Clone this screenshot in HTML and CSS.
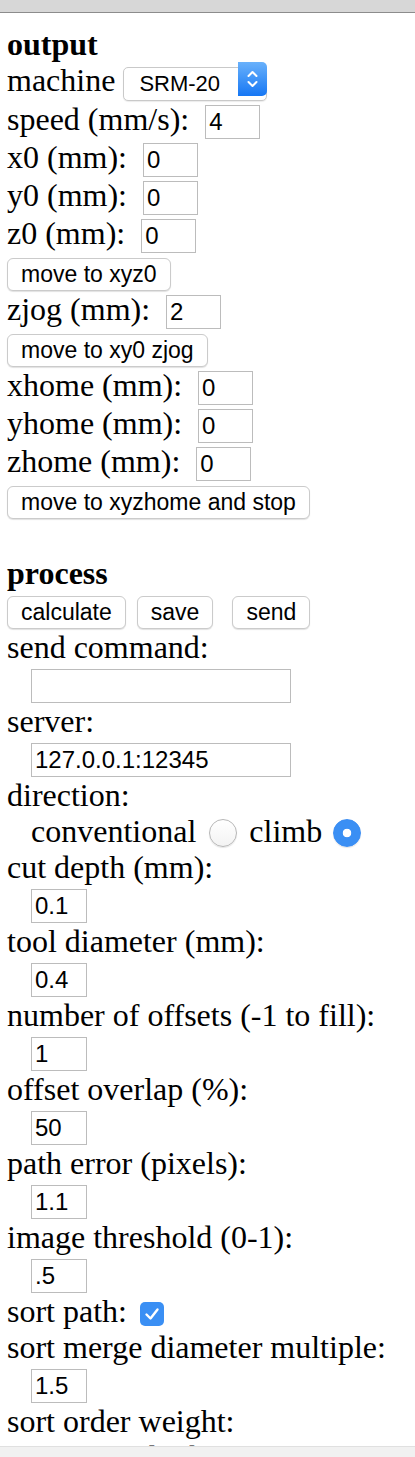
FILE: index.html
```html
<!DOCTYPE html>
<html lang="en">
<head>
    <meta charset="UTF-8">
    <meta name="viewport" content="width=device-width, initial-scale=1.0">
    <title>path output</title>
    <link rel="stylesheet" href="styles.css">
</head>
<body>
    <div class="topbar"></div>
    <div class="panel">
        <div class="heading">output</div>
        <div class="line">machine<span class="select-wrap"><select class="machine"><option>SRM-20</option><option>MDX-20</option></select><svg class="select-arrow" width="29" height="34" viewBox="0 0 29 34">
            <defs>
                <linearGradient id="blue" x1="0" y1="0" x2="0" y2="1">
                    <stop offset="0" stop-color="#69b1fb"/>
                    <stop offset="1" stop-color="#1677f4"/>
                </linearGradient>
            </defs>
            <path d="M0 0 H24 A5 5 0 0 1 29 5 V29 A5 5 0 0 1 24 34 H0 Z" fill="url(#blue)"/>
            <path d="M10.5 14 L14.5 10 L18.5 14 M10.5 20 L14.5 24 L18.5 20" fill="none" stroke="#fff" stroke-width="2" stroke-linecap="round" stroke-linejoin="round"/>
        </svg></span></div>
        <div class="line">speed (mm/s):<input class="num" type="text" value="4"></div>
        <div class="line">x0 (mm):<input class="num" type="text" value="0"></div>
        <div class="line">y0 (mm):<input class="num" type="text" value="0"></div>
        <div class="line">z0 (mm):<input class="num" type="text" value="0"></div>
        <div class="line"><button class="btn">move to xyz0</button></div>
        <div class="line">zjog (mm):<input class="num" type="text" value="2"></div>
        <div class="line"><button class="btn">move to xy0 zjog</button></div>
        <div class="line">xhome (mm):<input class="num" type="text" value="0"></div>
        <div class="line">yhome (mm):<input class="num" type="text" value="0"></div>
        <div class="line">zhome (mm):<input class="num" type="text" value="0"></div>
        <div class="line"><button class="btn">move to xyzhome and stop</button></div>
        <div class="line">&nbsp;</div>

        <div class="heading">process</div>
        <div class="line"><button class="btn calc">calculate</button><button class="btn save">save</button><button class="btn">send</button></div>
        <div class="line">send command:</div>
        <div class="line indent"><input class="wide" type="text" value=""></div>
        <div class="line">server:</div>
        <div class="line indent"><input class="wide" type="text" value="127.0.0.1:12345"></div>
        <div class="line">direction:</div>
        <div class="line indent">conventional<input class="radio" type="radio" name="direction">climb<input class="radio climb" type="radio" name="direction" checked></div>
        <div class="line">cut depth (mm):</div>
        <div class="line indent"><input class="num" type="text" value="0.1"></div>
        <div class="line">tool diameter (mm):</div>
        <div class="line indent"><input class="num" type="text" value="0.4"></div>
        <div class="line">number of offsets (-1 to fill):</div>
        <div class="line indent"><input class="num" type="text" value="1"></div>
        <div class="line">offset overlap (%):</div>
        <div class="line indent"><input class="num" type="text" value="50"></div>
        <div class="line">path error (pixels):</div>
        <div class="line indent"><input class="num" type="text" value="1.1"></div>
        <div class="line">image threshold (0-1):</div>
        <div class="line indent"><input class="num" type="text" value=".5"></div>
        <div class="line">sort path:<span class="checkbox"><svg width="24" height="24" viewBox="0 0 24 24">
            <rect width="24" height="24" rx="5" fill="#3a8ff4"/>
            <path d="M6.5 12.5 L10.5 16.5 L17.5 7.5" fill="none" stroke="#fff" stroke-width="2.4" stroke-linecap="round" stroke-linejoin="round"/>
        </svg></span></div>
        <div class="line">sort merge diameter multiple:</div>
        <div class="line indent"><input class="num" type="text" value="1.5"></div>
        <div class="line">sort order weight:</div>
        <div class="line indent">= 0 to order by shortest</div>
        <div class="line indent"><input class="num" type="text" value="-1"></div>
    </div>
    <div class="bottombar"></div>
</body>
</html>
```

FILE: styles.css
```css
body {
    margin: 0;
    font-family: 'Liberation Serif', 'Times New Roman', serif;
    font-size: 32px;
    line-height: 36px;
    color: #000;
    background-color: #fff;
    overflow: hidden;
}
.topbar {
    height: 12px;
    background: #d7d7d7;
    border-bottom: 1px solid #8c8c8c;
}
.panel {
    padding: 13px 7px 0 7px;
}
.heading {
    font-weight: bold;
}
.line {
    white-space: nowrap;
}
.indent {
    padding-left: 24px;
}
input.num,
input.wide {
    box-sizing: border-box;
    height: 34px;
    margin: 0 0 0 16px;
    padding: 0 3px;
    border: 1px solid #bcbcbc;
    border-radius: 0;
    font-family: 'Liberation Sans', Arial, sans-serif;
    font-size: 24px;
    color: #000;
    background: #fff;
    outline: none;
}
input.num {
    width: 55px;
}
input.wide {
    width: 260px;
}
.indent input.num,
.indent input.wide {
    margin-left: 0;
}
.indent input.num {
    width: 56px;
}
.select-wrap {
    position: relative;
    display: inline-block;
    margin-left: 8px;
}
.machine {
    -webkit-appearance: none;
    appearance: none;
    box-sizing: border-box;
    width: 144px;
    height: 34px;
    margin: 0;
    padding: 0 0 0 15px;
    border: 1px solid #c9c9c9;
    border-radius: 5px;
    background: #fff;
    font-family: 'Liberation Sans', Arial, sans-serif;
    font-size: 22px;
    color: #000;
    box-shadow: 0 1px 1px rgba(0, 0, 0, 0.08);
}
.select-arrow {
    position: absolute;
    top: 0;
    right: 0;
    pointer-events: none;
}
.btn {
    box-sizing: border-box;
    height: 33px;
    margin: 0;
    padding: 0 13px;
    border: 1px solid #cbcbcb;
    border-radius: 6px;
    background: #fff;
    box-shadow: 0 1px 1px rgba(0, 0, 0, 0.12);
    font-family: 'Liberation Sans', Arial, sans-serif;
    font-size: 23px;
    color: #000;
}
.btn.calc {
    margin-right: 11px;
}
.btn.save {
    margin-right: 19px;
}
.radio {
    -webkit-appearance: none;
    appearance: none;
    box-sizing: border-box;
    width: 28px;
    height: 28px;
    margin: 0 12px 0 13px;
    vertical-align: -5px;
    border: 1px solid #b7b7b7;
    border-radius: 50%;
    background: linear-gradient(#fff, #f3f3f3);
    box-shadow: 0 1px 1px rgba(0, 0, 0, 0.1);
}
.radio.climb {
    margin-left: 11px;
}
.radio:checked {
    border-color: #3a8df3;
    background: radial-gradient(circle, #fff 0 4px, #3a8ff4 4.6px);
}
.checkbox {
    display: inline-block;
    width: 24px;
    height: 24px;
    margin-left: 13px;
    vertical-align: -4px;
}
.checkbox svg {
    display: block;
}
.bottombar {
    position: fixed;
    left: 0;
    right: 0;
    bottom: 0;
    height: 10px;
    background: #f1f1f1;
    border-top: 1px solid #e0e0e0;
}
```
